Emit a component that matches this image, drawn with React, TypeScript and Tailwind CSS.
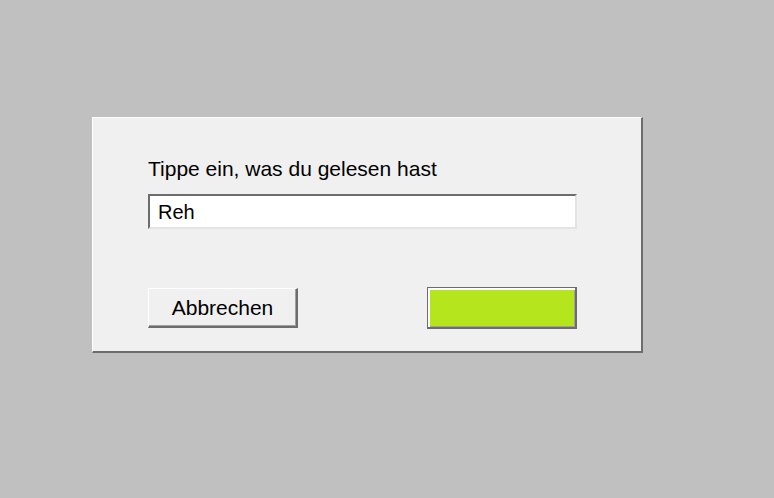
export default function App() {
  return (
    <div
      className="min-h-[498px] w-full bg-[#c0c0c0] pl-[92px] pt-[117px] text-black"
      style={{ fontFamily: '"Liberation Sans", Arial, sans-serif' }}
    >
      <div className="box-border flex h-[236px] w-[551px] flex-col border-t border-l border-r-2 border-b-2 border-t-white border-l-white border-r-[#6d6d6d] border-b-[#6d6d6d] bg-[#f0f0f0] pl-[55px] pt-[39px]">
        <div className="text-[21px] leading-[24px]">Tippe ein, was du gelesen hast</div>

        <div className="mt-[13px] box-border flex h-[35px] w-[429px] items-center border-2 border-t-[#6d6d6d] border-l-[#6d6d6d] border-r-[#e3e3e3] border-b-[#e3e3e3] bg-white pl-[8px] text-[20px] leading-[24px]">
          Reh
        </div>

        <div className="mt-[58px] flex items-start">
          <button className="mt-px box-border flex h-[40px] w-[150px] items-center justify-center border-t border-l border-r-2 border-b-2 border-t-white border-l-white border-r-[#6d6d6d] border-b-[#6d6d6d] bg-[#f0f0f0] text-[21px] leading-[24px] shadow-[inset_-1px_-1px_0_#a0a0a0]">
            Abbrechen
          </button>
          <button className="ml-[129px] box-border h-[42px] w-[150px] border-t border-l border-r-2 border-b-2 border-[#6d6d6d] bg-[#b5e61d] shadow-[inset_2px_2px_0_#ffffff,inset_-1px_-1px_0_#a0a0a0]" />
        </div>
      </div>
    </div>
  );
}
